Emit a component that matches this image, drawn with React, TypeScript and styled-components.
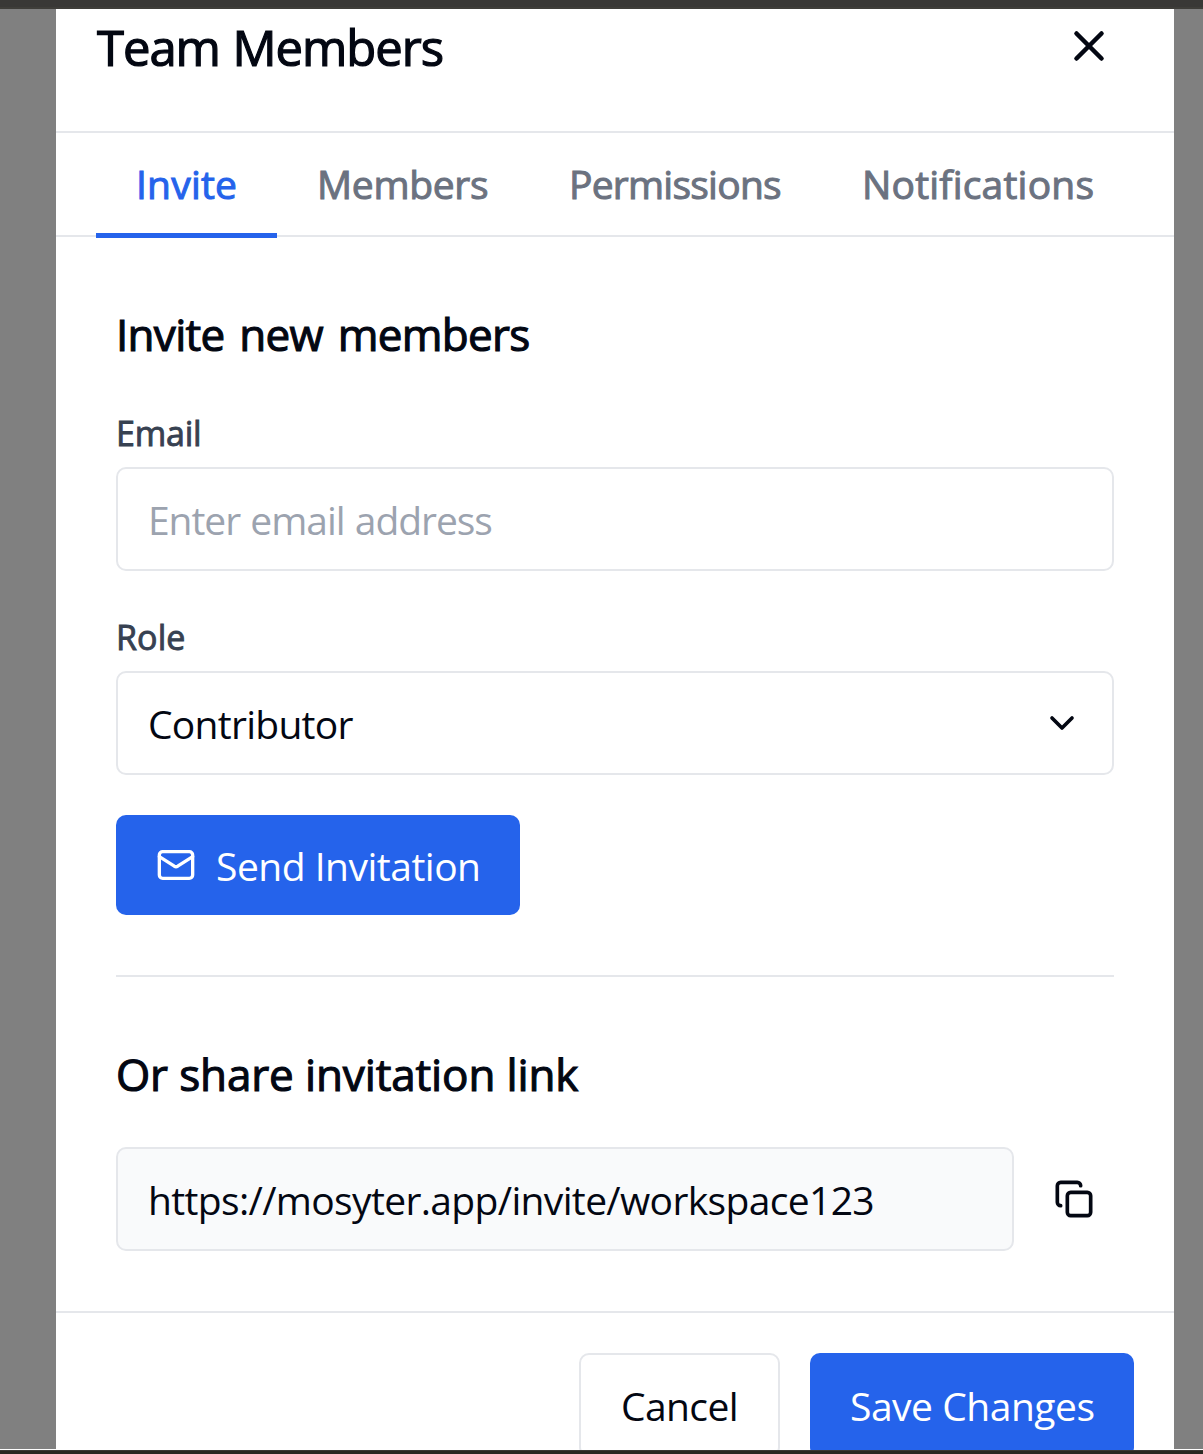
import React from 'react';
import styled, { createGlobalStyle } from 'styled-components';
import { ChevronDown, Copy, Mail, X } from 'lucide-react';

const GlobalStyle = createGlobalStyle`
  * { box-sizing: border-box; }
  body { margin: 0; background: #fff; }
  body, button, input { font-family: "Open Sans", "Noto Sans", sans-serif; }
  h2, h3 { margin: 0; font-weight: 400; }
  svg { display: block; flex: none; }
`;

const ink = '#030712';
const line = '#e5e7eb';
const blue = '#2563eb';

const Screen = styled.div`
  height: 1454px;
  overflow: hidden;
  display: grid;
  grid-template-rows: 9px 1441px 4px;
`;

const TopBar = styled.div`
  background: linear-gradient(#393836 0 7px, #3f3e3a 7px);
`;

const BottomBar = styled.div`
  background: linear-gradient(#3a3935 0 1px, #292822 1px);
`;

const Stage = styled.div`
  min-height: 0;
  overflow: hidden;
  display: grid;
  grid-template-columns: 56px 1fr 29px;
`;

const Backdrop = styled.div`
  height: 1440px;
  background: #808080;
`;

const Dialog = styled.section`
  display: flex;
  flex-direction: column;
  min-width: 0;
  background: #fff;
  color: ${ink};
`;

const Header = styled.header`
  flex: none;
  height: 124px;
  padding: 8px 60px 0 41px;
  border-bottom: 2px solid ${line};
  display: flex;
  justify-content: space-between;
  align-items: flex-start;
`;

const Title = styled.h2`
  font-size: 49px;
  line-height: 60px;
  letter-spacing: -1.05px;
  word-spacing: 1px;
  -webkit-text-stroke: 1.2px;
`;

const IconButton = styled.button`
  border: 0;
  background: none;
  color: ${ink};
  padding: 0;
  display: flex;
`;

const CloseButton = styled(IconButton)`
  margin-top: 4px;
`;

const Tabs = styled.nav`
  flex: none;
  height: 104px;
  padding: 0 40px;
  border-bottom: 2px solid ${line};
  display: flex;
`;

const Tab = styled.button<{ $active?: boolean; $spacing: number; $width: number }>`
  flex: none;
  width: ${(p) => p.$width}px;
  height: 105px;
  padding: 21px 0 0 40px;
  border: 0;
  border-bottom: 5px solid ${(p) => (p.$active ? blue : 'transparent')};
  background: none;
  color: ${(p) => (p.$active ? blue : '#6b7280')};
  font-size: 39px;
  line-height: 60px;
  letter-spacing: ${(p) => p.$spacing}px;
  -webkit-text-stroke: 1px;
  display: flex;
  align-items: flex-start;
  white-space: nowrap;
`;

const Content = styled.div`
  flex: none;
  height: 1074px;
  padding: 67px 60px 0;
`;

const SectionTitle = styled.h3<{ $spacing: number; $words?: number }>`
  font-size: 44px;
  line-height: 60px;
  letter-spacing: ${(p) => p.$spacing}px;
  word-spacing: ${(p) => p.$words ?? 0}px;
  -webkit-text-stroke: 1.1px;
`;

const Field = styled.div`
  margin-top: 44px;
  & + & { margin-top: 41px; }
`;

const Label = styled.label<{ $spacing: number }>`
  display: block;
  margin-bottom: 9px;
  color: #374151;
  font-size: 34px;
  line-height: 50px;
  letter-spacing: ${(p) => p.$spacing}px;
  -webkit-text-stroke: 0.9px;
`;

const TextInput = styled.input`
  display: block;
  width: 100%;
  height: 104px;
  padding: 0 30px;
  border: 2px solid ${line};
  border-radius: 10px;
  background: #fff;
  color: ${ink};
  font-size: 39px;
  letter-spacing: -1.05px;
  word-spacing: 1.2px;
  outline: 0;
  &::placeholder { color: #9ca3af; opacity: 1; }
`;

const LinkInput = styled(TextInput)`
  flex: 1;
  min-width: 0;
  background: #f9fafb;
  letter-spacing: -0.65px;
`;

const SelectBox = styled.button`
  width: 100%;
  height: 104px;
  padding: 0 30px;
  border: 2px solid ${line};
  border-radius: 10px;
  background: #fff;
  color: ${ink};
  font-size: 39px;
  letter-spacing: -0.73px;
  display: flex;
  align-items: center;
  justify-content: space-between;
`;

const Caption = styled.span`
  line-height: 60px;
  padding-top: 2px;
`;

const Button = styled.button<{ $outlined?: boolean; $width: number; $height: number; $spacing: number }>`
  width: ${(p) => p.$width}px;
  height: ${(p) => p.$height}px;
  padding: 0 0 0 40px;
  border: ${(p) => (p.$outlined ? `2px solid ${line}` : '0')};
  border-radius: 10px;
  background: ${(p) => (p.$outlined ? '#fff' : blue)};
  color: ${(p) => (p.$outlined ? ink : '#fff')};
  font-size: 39px;
  letter-spacing: ${(p) => p.$spacing}px;
  display: flex;
  align-items: center;
  gap: 20px;
  white-space: nowrap;
`;

const Actions = styled.div`
  margin-top: 40px;
  padding-bottom: 60px;
  margin-bottom: 67px;
  border-bottom: 2px solid ${line};
`;

const LinkRow = styled.div`
  margin-top: 43px;
  padding-right: 20px;
  display: flex;
  align-items: center;
  gap: 40px;
`;

const Footer = styled.footer`
  flex: none;
  padding: 40px;
  border-top: 2px solid ${line};
  display: flex;
  justify-content: flex-end;
  gap: 30px;
`;

const tabs = [
  { name: 'Invite', spacing: 0.2, width: 181 },
  { name: 'Members', spacing: -0.3, width: 252 },
  { name: 'Permissions', spacing: -0.76, width: 293 },
  { name: 'Notifications', spacing: 0.2, width: 312 },
];

export default function App() {
  return (
    <Screen>
      <GlobalStyle />
      <TopBar />
      <Stage>
        <Backdrop />
        <Dialog>
          <Header>
            <Title>Team Members</Title>
            <CloseButton aria-label="Close"><X size={50} strokeWidth={2.2} /></CloseButton>
          </Header>
          <Tabs>
            {tabs.map((t, i) => (
              <Tab key={t.name} $active={i === 0} $spacing={t.spacing} $width={t.width}>{t.name}</Tab>
            ))}
          </Tabs>
          <Content>
            <SectionTitle $spacing={-0.7} $words={4}>Invite new members</SectionTitle>
            <Field>
              <Label $spacing={-0.2}>Email</Label>
              <TextInput placeholder="Enter email address" />
            </Field>
            <Field>
              <Label $spacing={0.1}>Role</Label>
              <SelectBox>
                <Caption>Contributor</Caption>
                <ChevronDown size={40} strokeWidth={2.2} />
              </SelectBox>
            </Field>
            <Actions>
              <Button $width={404} $height={100} $spacing={-0.5}>
                <Mail size={40} />
                <Caption>Send Invitation</Caption>
              </Button>
            </Actions>
            <SectionTitle $spacing={-0.13}>Or share invitation link</SectionTitle>
            <LinkRow>
              <LinkInput readOnly value="https://mosyter.app/invite/workspace123" />
              <IconButton aria-label="Copy link"><Copy size={40} strokeWidth={2.2} /></IconButton>
            </LinkRow>
          </Content>
          <Footer>
            <Button $outlined $width={201} $height={104} $spacing={-0.6}><Caption>Cancel</Caption></Button>
            <Button $width={324} $height={104} $spacing={-0.48}><Caption>Save Changes</Caption></Button>
          </Footer>
        </Dialog>
        <Backdrop />
      </Stage>
      <BottomBar />
    </Screen>
  );
}
